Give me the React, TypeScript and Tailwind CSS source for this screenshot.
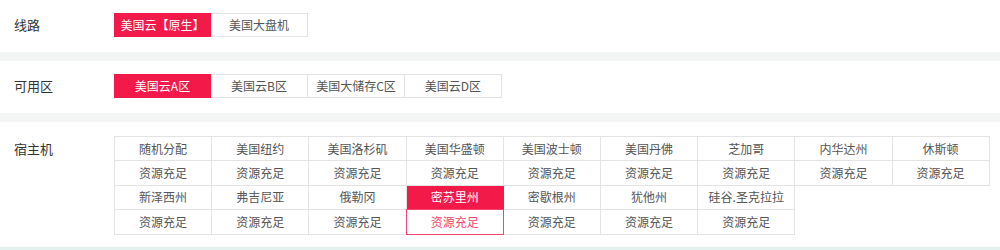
import React from "react";

function Btn({ label, active, first }: { label: string; active?: boolean; first?: boolean }) {
  return (
    <div
      className={
        "h-[24px] w-[97px] flex items-center justify-center text-[12px] border-y border-r " +
        (first ? "border-l " : "") +
        (active ? "bg-[#f31a4a] border-[#f31a4a] text-white" : "bg-white border-[#e3e3e3] text-[#555]")
      }
    >
      {label}
    </div>
  );
}

function Band({ last }: { last?: boolean }) {
  return <div className={last ? "h-[3px] bg-[#e4f2ef]" : "h-[9px] bg-[#f3f5f5]"} />;
}

const row1 = ["随机分配", "美国纽约", "美国洛杉矶", "美国华盛顿", "美国波士顿", "美国丹佛", "芝加哥", "内华达州", "休斯顿"];
const row2 = ["新泽西州", "弗吉尼亚", "俄勒冈", "密苏里州", "密歇根州", "犹他州", "硅谷.圣克拉拉"];

export default function App() {
  const cells: React.ReactNode[] = [];
  const pushRow = (names: string[], rowIdx: number) => {
    names.forEach((n, i) => {
      const sel = rowIdx === 1 && i === 3;
      cells.push(
        <div
          key={`n${rowIdx}-${i}`}
          style={{ gridRow: rowIdx * 2 + 1, gridColumn: i + 1 }}
          className={
            "flex items-center justify-center border-r border-b text-[12px] " +
            (sel ? "bg-[#f31a4a] border-[#f31a4a] text-white" : "border-[#e3e3e3] text-[#555]")
          }
        >
          {n}
        </div>
      );
      cells.push(
        <div
          key={`s${rowIdx}-${i}`}
          style={{ gridRow: rowIdx * 2 + 2, gridColumn: i + 1 }}
          className={
            "relative flex items-center justify-center border-r border-b border-[#e3e3e3] text-[12px] " +
            (sel
              ? "text-[#f4466d] after:absolute after:-left-px after:-top-px after:-right-px after:-bottom-px after:border after:border-[#f4466d]"
              : "text-[#555]")
          }
        >
          资源充足
        </div>
      );
    });
  };
  pushRow(row1, 0);
  pushRow(row2, 1);

  return (
    <div
      className="w-[1000px] h-[250px] bg-white overflow-hidden"
      style={{ fontFamily: '"Noto Sans CJK SC", "Noto Sans", sans-serif' }}
    >
      <div className="h-[52px] flex items-start pt-[13px]">
        <div className="w-[114px] pl-[14px] h-[24px] flex items-center text-[13px] text-[#333]">线路</div>
        <div className="flex">
          <Btn label="美国云【原生】" active first />
          <Btn label="美国大盘机" />
        </div>
      </div>
      <Band />
      <div className="h-[52px] flex items-start pt-[13px]">
        <div className="w-[114px] pl-[14px] h-[24px] flex items-center text-[13px] text-[#333]">可用区</div>
        <div className="flex">
          <Btn label="美国云A区" active first />
          <Btn label="美国云B区" />
          <Btn label="美国大储存C区" />
          <Btn label="美国云D区" />
        </div>
      </div>
      <Band />
      <div className="h-[125px] flex items-start pt-[14px]">
        <div className="w-[114px] pl-[14px] h-[25px] flex items-center text-[13px] text-[#333]">宿主机</div>
        <div className="grid grid-cols-[repeat(9,97.2px)] grid-rows-[24px_repeat(3,24.5px)] border-l border-t border-[#e3e3e3]">
          {cells}
        </div>
      </div>
      <Band last />
    </div>
  );
}
